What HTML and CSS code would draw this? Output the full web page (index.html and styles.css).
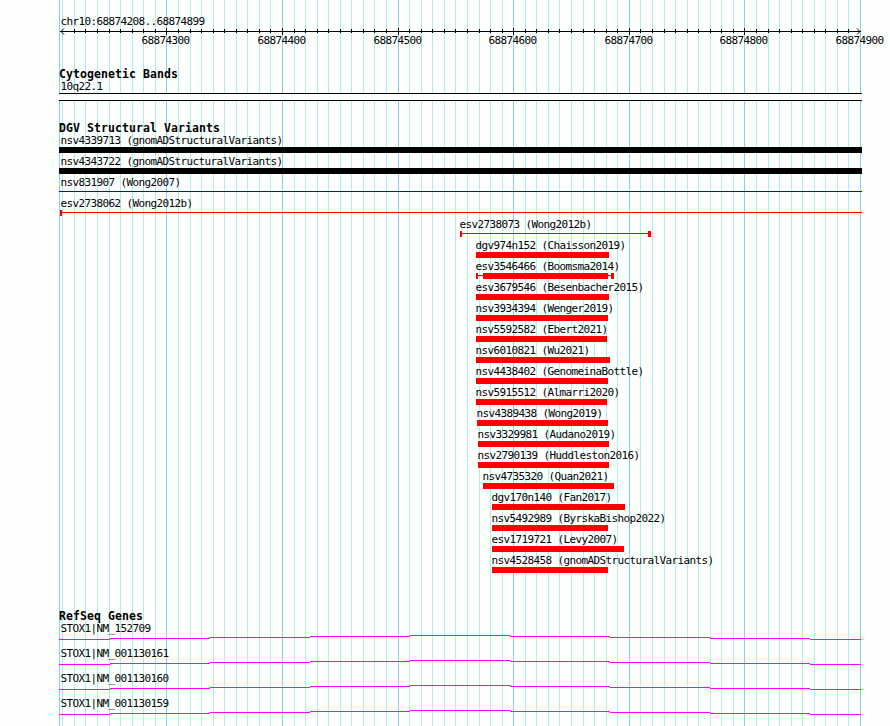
FILE: index.html
```html
<!DOCTYPE html>
<html lang="en">
<head>
  <meta charset="UTF-8" />
  <meta name="viewport" content="width=device-width, initial-scale=1.0"/>
  <title>chr10:68874208..68874899</title>
  <link rel="stylesheet" href="styles.css">
</head>
<body>
  <main class="browser">
    <svg class="grid" id="grid" width="890" height="726" shape-rendering="crispEdges"></svg>

    <header class="scale">
      <p class="label">chr10:68874208..68874899</p>
      <svg class="ruler" id="ruler" width="890" height="20" shape-rendering="crispEdges"></svg>
    </header>

    <section class="track cytobands">
      <h2>Cytogenetic Bands</h2>
      <p class="label">10q22.1</p>
      <div class="band"></div>
    </section>

    <section class="track variants">
      <h2>DGV Structural Variants</h2>
      <div id="variants"></div>
    </section>

    <section class="track genes">
      <h2>RefSeq Genes</h2>
      <div id="genes"></div>
    </section>
  </main>

  <script src="script.js"></script>
</body>
</html>
```
FILE: styles.css
```css
body {
  margin: 0;
  background-color: #fdfffc;
  color: #000;
  font-family: 'DejaVu Sans Mono', monospace;
  font-size: 11px;
  line-height: 13px;
}
.browser {
  position: relative;
  width: 890px;
  height: 726px;
  overflow: hidden;
}
.grid {
  position: absolute;
  top: 0;
  left: 0;
  z-index: -1;
}
.grid .minor {
  fill: #afeeee;
}
.grid .major {
  fill: #87ceeb;
}
.scale {
  height: 53px;
  padding-top: 15px;
}
.label {
  margin: 0 0 0 60px;
  padding-left: 0.4px;
  height: 13px;
  letter-spacing: -0.622px;
  white-space: nowrap;
}
.ruler {
  display: block;
}
.ruler text {
  letter-spacing: -0.622px;
}
.ruler path {
  fill: none;
  stroke: #000;
}
h2 {
  margin: 0 0 0 59px;
  height: 12px;
  font-size: 11.5px;
  line-height: 13px;
  letter-spacing: 0.077px;
}
.band {
  box-sizing: border-box;
  width: 803px;
  height: 8px;
  margin-left: 59px;
  border: solid #000;
  border-width: 1px 0;
  background-color: #fdfffc;
}
.variants {
  margin-top: 21px;
}
.variant {
  height: 21px;
}
.glyph {
  display: flex;
  align-items: flex-start;
  height: 6px;
  color: #f00;
}
.glyph.black {
  color: #000;
}
.glyph.blue {
  color: #00f;
}
.box {
  height: 6px;
  background-color: currentColor;
}
.line {
  height: 1px;
  margin-top: 2px;
  background-color: currentColor;
}
.genes {
  margin-top: 35px;
}
.gene {
  height: 25px;
}
.gene svg {
  display: block;
}
.gene rect {
  fill: #f0f;
}
```
FILE: script.js
```js
// [name, label x, glyph x, colour, parts], each part is [type, width]
const variants = [
  ['nsv4339713 (gnomADStructuralVariants)', 60, 59, 'black', [['box', 803]]],
  ['nsv4343722 (gnomADStructuralVariants)', 60, 59, 'black', [['box', 803]]],
  ['nsv831907 (Wong2007)', 60, 59, 'blue', [['line', 803]]],
  ['esv2738062 (Wong2012b)', 60, 60, 'red', [['box', 2], ['line', 800]]],
  ['esv2738073 (Wong2012b)', 459, 460, 'red', [['box', 2], ['line', 186], ['box', 3]]],
  ['dgv974n152 (Chaisson2019)', 475, 476, 'red', [['box', 133]]],
  ['esv3546466 (Boomsma2014)', 475, 476, 'red', [['box', 2], ['line', 5], ['box', 125], ['line', 3], ['box', 3]]],
  ['esv3679546 (Besenbacher2015)', 475, 476, 'red', [['box', 133]]],
  ['nsv3934394 (Wenger2019)', 475, 476, 'red', [['box', 132]]],
  ['nsv5592582 (Ebert2021)', 475, 476, 'red', [['box', 131]]],
  ['nsv6010821 (Wu2021)', 475, 476, 'red', [['box', 134]]],
  ['nsv4438402 (GenomeinaBottle)', 475, 476, 'red', [['box', 132]]],
  ['nsv5915512 (Almarri2020)', 475, 476, 'red', [['box', 131]]],
  ['nsv4389438 (Wong2019)', 476, 477, 'red', [['box', 131]]],
  ['nsv3329981 (Audano2019)', 477, 478, 'red', [['box', 131]]],
  ['nsv2790139 (Huddleston2016)', 477, 478, 'red', [['box', 131]]],
  ['nsv4735320 (Quan2021)', 482, 483, 'red', [['box', 131]]],
  ['dgv170n140 (Fan2017)', 491, 492, 'red', [['box', 133]]],
  ['nsv5492989 (ByrskaBishop2022)', 491, 492, 'red', [['box', 116]]],
  ['esv1719721 (Levy2007)', 491, 492, 'red', [['box', 132]]],
  ['nsv4528458 (gnomADStructuralVariants)', 491, 492, 'red', [['box', 116]]]
];

const genes = ['STOX1|NM_152709', 'STOX1|NM_001130161', 'STOX1|NM_001130160', 'STOX1|NM_001130159'];

// grid lines and ruler ticks, one every 10 bp
let gridSVG = '<rect class="major" x="59" y="0" width="1" height="726"/>';
let rulerSVG = '<path d="M60 3.5H861"/>';

for (let i = 0; i < 70; i++) {
  const x = Math.floor(62.85 + i * 8000 / 692);
  const pos = 68874210 + i * 10;
  const major = pos % 100 === 0;

  gridSVG += `<rect class="${major ? 'major' : 'minor'}" x="${x}" y="0" width="1" height="726"/>`;
  if (i > 0 && i < 69) {
    rulerSVG += `<path d="M${x + 0.5} ${major ? '0V7' : '1V5'}"/>`;
  }
  if (major) {
    rulerSVG += `<text x="${x - 24.6}" y="16">${pos}</text>`;
  }
}

// arrow heads
rulerSVG += '<path shape-rendering="auto" d="M64 0.5L61 3.5L64 6.5M857 0.5L860 3.5L857 6.5"/>';

document.getElementById('grid').innerHTML = gridSVG;
document.getElementById('ruler').innerHTML = rulerSVG;

document.getElementById('variants').innerHTML = variants.map(([name, labelX, x, color, parts]) => `
  <div class="variant">
    <p class="label" style="margin-left: ${labelX}px">${name}</p>
    <div class="glyph ${color}" style="margin-left: ${x}px">
      ${parts.map(([type, width]) => `<div class="${type}" style="width: ${width}px"></div>`).join('')}
    </div>
  </div>
`).join('');

// introns rise to the middle of the view and fall again
const stops = [59, 110, 210, 310, 410, 510, 610, 710, 810, 861];
let intron = '';
for (let i = 0; i < 9; i++) {
  intron += `<rect x="${stops[i]}" y="${Math.abs(4 - i)}" width="${stops[i + 1] - stops[i]}" height="1"/>`;
}

document.getElementById('genes').innerHTML = genes.map(name => `
  <div class="gene">
    <p class="label">${name}</p>
    <svg width="890" height="5" shape-rendering="crispEdges">${intron}</svg>
  </div>
`).join('');
```
